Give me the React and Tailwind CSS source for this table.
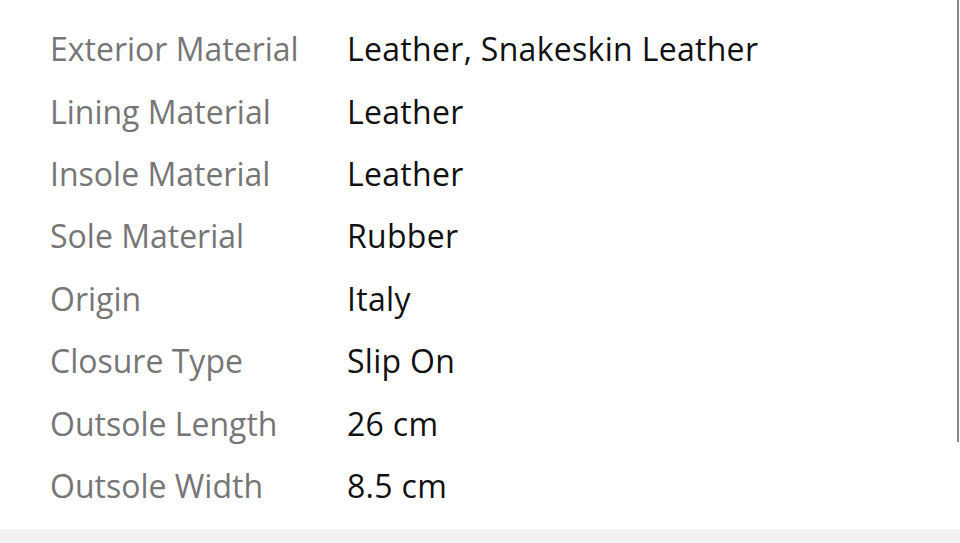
import React from 'react';

const specs = [
  ['Exterior Material', 'Leather, Snakeskin Leather'],
  ['Lining Material', 'Leather'],
  ['Insole Material', 'Leather'],
  ['Sole Material', 'Rubber'],
  ['Origin', 'Italy'],
  ['Closure Type', 'Slip On'],
  ['Outsole Length', '26 cm'],
  ['Outsole Width', '8.5 cm'],
];

const App = () => {
  return (
    <div className="relative w-[960px] h-[543px] bg-white flex flex-col overflow-hidden font-['Open_Sans','Lato',sans-serif]">
      {/* Spec rows */}
      <div className="flex-1 pt-[18px]">
        {specs.map(([label, value]) => (
          <div key={label} className="flex items-center h-[62.4px] text-[32px] leading-none">
            <span className="w-[347px] pl-[50px] shrink-0 text-[#767676]">{label}</span>
            <span className="text-[#111111] tracking-[0.3px]">{value}</span>
          </div>
        ))}
      </div>

      {/* Bottom strip */}
      <div className="h-[14px] bg-[#f2f2f2]" />

      {/* Scroll indicator */}
      <div className="absolute right-[1px] top-0 w-[2px] h-[442px] bg-[#8a8a8a]" />
    </div>
  );
};

export default App;
